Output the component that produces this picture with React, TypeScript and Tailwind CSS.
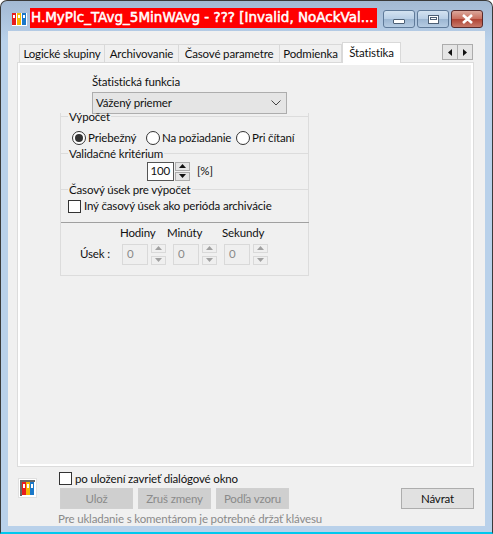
const font = "font-['Lato','Noto_Sans',sans-serif]";

function Spinner({ disabled, h = "h-[19px]" }: { disabled?: boolean; h?: string }) {
  const face = disabled ? "border-[#d9d9d9] bg-[#efefef]" : "border-[#acacac] bg-[#e5e5e5]";
  const arrow = disabled ? "#a0a0a0" : "#111";
  return (
    <div className={`flex w-[15px] flex-col justify-between ${h}`}>
      <div className={`flex h-[9px] items-center justify-center border ${face}`}>
        <svg width="7" height="4" viewBox="0 0 7 4"><path d="M3.5 0 7 4H0z" fill={arrow} /></svg>
      </div>
      <div className={`flex h-[9px] items-center justify-center border ${face}`}>
        <svg width="7" height="4" viewBox="0 0 7 4"><path d="M0 0h7L3.5 4z" fill={arrow} /></svg>
      </div>
    </div>
  );
}

function Radio({ label, checked, className }: { label: string; checked?: boolean; className: string }) {
  return (
    <div className={`flex items-center whitespace-nowrap ${className}`}>
      <span className="flex h-[14px] w-[14px] items-center justify-center rounded-full border border-[#333] bg-white">
        {checked && <span className="h-2 w-2 rounded-full bg-[#333]" />}
      </span>
      <span className="ml-[2px]">{label}</span>
    </div>
  );
}

function TimeField() {
  return (
    <div className="flex items-center gap-[3px]">
      <div className="flex h-[21px] w-[26px] items-center border border-[#d9d9d9] bg-[#efefef] pl-[4px] text-[#8a8a8a]">0</div>
      <Spinner disabled h="h-[21px]" />
    </div>
  );
}

function Section({ title, className }: { title: string; className?: string }) {
  return (
    <div className={`flex h-[14px] items-center ${className ?? ""}`}>
      <div className="h-px w-[8px] bg-[#dcdcdc]" />
      <span className="px-px leading-none">{title}</span>
      <div className="h-px flex-1 bg-[#dcdcdc]" />
    </div>
  );
}

function Tab({ label, w, active }: { label: string; w: string; active?: boolean }) {
  return active ? (
    <div className={`z-10 flex h-[21px] items-center justify-center whitespace-nowrap border border-b-0 border-[#d9d9d9] bg-white ${w}`}>{label}</div>
  ) : (
    <div className={`flex h-[19px] items-center justify-center whitespace-nowrap border-y border-r border-[#d9d9d9] bg-[#f0f0f0] first:border-l ${w}`}>{label}</div>
  );
}

function CaptionButton({ children, close }: { children: React.ReactNode; close?: boolean }) {
  return (
    <div
      className={`flex h-[18px] w-[32px] items-center justify-center rounded-[3px] border ${
        close
          ? "border-[#5a2a2a] bg-[linear-gradient(#dba79b,#c9705f_48%,#b04434_52%,#c7796a)]"
          : "border-[#5f7a99] bg-[linear-gradient(#d3e2f1,#b9cfe6_48%,#9cb6d2_52%,#b5cbe2)]"
      }`}
    >
      {children}
    </div>
  );
}

export default function App() {
  return (
    <div className={`${font} h-[534px] w-[493px] overflow-hidden bg-white text-[11.5px] leading-none tracking-[-0.15px] text-[#111]`}>
      <div className="flex h-full w-full flex-col rounded-t-[7px] border border-b-2 border-[#3a3a3a] border-b-[#00c8ee] bg-[linear-gradient(#a3b9d3,#b9d1ea_40px)] pr-[7px] pb-[6px] pl-[7px]">
        {/* title bar */}
        <div className="flex h-[30px] shrink-0 items-start pt-[7px]">
          <svg width="17" height="16" viewBox="0 0 17 16" className="mt-[4px] ml-[3px] shrink-0">
            <rect x="1" y="1" width="15" height="13" fill="#fff" />
            <rect x="1" y="1" width="4" height="12" fill="#e81c1c" />
            <rect x="6" y="1" width="4" height="12" fill="#f5b800" />
            <rect x="11" y="1" width="4" height="12" fill="#1a78c8" />
            <rect x="2" y="3" width="2" height="3" fill="#fff" />
            <rect x="7" y="3" width="2" height="3" fill="#fff" />
            <rect x="12" y="3" width="2" height="3" fill="#fff" />
          </svg>
          <div className="ml-[2px] flex h-[20px] w-[347px] items-center whitespace-nowrap bg-[#ff0000] pl-px font-['DejaVu_Sans',sans-serif] text-[13.5px] tracking-normal text-white [-webkit-text-stroke:0.5px_white]">
            H.MyPlc_TAvg_5MinWAvg - ??? [Invalid, NoAckVal...
          </div>
          <div className="mt-[2px] ml-auto flex gap-[2px] pr-[2px]">
            <CaptionButton>
              <div className="mt-[4px] h-[5px] w-[12px] rounded-[1px] border border-[#4c5f75] bg-white" />
            </CaptionButton>
            <CaptionButton>
              <div className="h-[9px] w-[11px] border border-[#4c5f75] bg-white p-[1px]"><div className="h-[3px] w-full border border-[#4c5f75]" /></div>
            </CaptionButton>
            <CaptionButton close>
              <svg width="13" height="10" viewBox="0 0 13 10"><path d="M2 1l9 8M11 1l-9 8" stroke="#fff" strokeWidth="2.6" fill="none" /></svg>
            </CaptionButton>
          </div>
        </div>

        {/* client area */}
        <div className="flex min-h-0 flex-1 flex-col bg-[#f0f0f0] px-[10px] pt-[11px]">
          <div className="relative flex h-[21px] shrink-0 items-end pl-px">
            <Tab label="Logické skupiny" w="w-[86px]" />
            <Tab label="Archivovanie" w="w-[74px]" />
            <Tab label="Časové parametre" w="w-[101px]" />
            <Tab label="Podmienka" w="w-[62px]" />
            <Tab label="Štatistika" w="w-[59px]" active />
            <div className="absolute right-[2px] bottom-[3px] flex h-[16px]">
              <div className="flex w-[16px] items-center justify-center border border-[#acacac] bg-[#e5e5e5]">
                <svg width="4" height="7" viewBox="0 0 4 7"><path d="M4 0v7L0 3.5z" fill="#111" /></svg>
              </div>
              <div className="flex w-[15px] items-center justify-center border border-l-0 border-[#acacac] bg-[#e5e5e5]">
                <svg width="4" height="7" viewBox="0 0 4 7"><path d="M0 0v7l4-3.5z" fill="#111" /></svg>
              </div>
            </div>
          </div>

          <div className="h-[403px] w-[455px] shrink-0 border-2 border-white pt-[11px] pl-[40px] shadow-[0_0_0_1px_#dcdcdc]">
            <div className="pl-[32px]">Štatistická funkcia</div>
            <div className="mt-[4px] ml-[32px] flex h-[22px] w-[195px] items-center justify-between border border-[#adadad] bg-[#e5e5e5] pr-[4px] pl-[3px]">
              Vážený priemer
              <svg width="10" height="6" viewBox="0 0 10 6" className="mr-[1px]"><path d="M.5.5 5 5 9.500.5" fill="none" stroke="#444" /></svg>
            </div>

            {/* group box */}
            <div className="mt-[-1px] h-[163px] w-[249px]">
              <div className="flex h-full flex-col border-x border-b border-[#dcdcdc]">
                <Section title="Výpočet" className="-mx-px mt-[-3px]" />
                <div className="relative mt-[7px] h-[14px]">
                  <Radio label="Priebežný" checked className="absolute left-[11px]" />
                  <Radio label="Na požiadanie" className="absolute left-[85px]" />
                  <Radio label="Pri čítaní" className="absolute left-[175px]" />
                </div>
                <Section title="Validačné kritérium" className="-mx-px mt-[2px]" />
                <div className="mt-[1px] ml-[86px] flex h-[19px] items-center">
                  <div className="flex h-[19px] w-[27px] items-center justify-end border border-[#555] bg-white pr-[3px]">100</div>
                  <div className="ml-px"><Spinner /></div>
                  <span className="ml-[7px]">[%]</span>
                </div>
                <Section title="Časový úsek pre výpočet" className="-mx-px mt-[2px]" />
                <div className="mt-[3px] ml-[7px] flex h-[13px] items-center">
                  <span className="h-[13px] w-[13px] border border-[#333] bg-white" />
                  <span className="ml-[3px]">Iný časový úsek ako perióda archivácie</span>
                </div>
                <div className="mt-[9px] -mr-px h-px bg-[#a0a0a0]" />
                <div className="relative mt-[4px] h-[13px]">
                  <span className="absolute left-[59px]">Hodiny</span>
                  <span className="absolute left-[106px]">Minúty</span>
                  <span className="absolute left-[161px]">Sekundy</span>
                </div>
                <div className="mt-[4px] flex items-center">
                  <span className="ml-[19px] w-[42px]">Úsek :</span>
                  <div className="flex gap-[7px]">
                    <TimeField />
                    <TimeField />
                    <TimeField />
                  </div>
                </div>
              </div>
            </div>
          </div>

          {/* footer */}
          <div className="mt-[6px] flex min-h-0 flex-1">
            <svg width="19" height="20" viewBox="0 0 19 20" className="mt-[6px] shrink-0">
              <rect x=".5" y=".5" width="18" height="19" fill="#fff" stroke="#e0e0e0" />
              <path d="M2 18V2h15v2H4v14z" fill="#666" />
              <rect x="4" y="4" width="4" height="13" fill="#e81c1c" />
              <rect x="8" y="4" width="4" height="13" fill="#f5b800" />
              <rect x="12" y="4" width="4" height="13" fill="#1a78c8" />
              <rect x="5" y="6" width="2" height="4" fill="#fff" />
              <rect x="9" y="6" width="2" height="4" fill="#fff" />
              <rect x="13" y="6" width="2" height="4" fill="#fff" />
            </svg>
            <div className="ml-[22px] flex flex-1 flex-col">
              <div className="flex h-[13px] items-center">
                <span className="h-[13px] w-[13px] border border-[#333] bg-white" />
                <span className="ml-[3px]">po uložení zavrieť dialógové okno</span>
              </div>
              <div className="mt-[3px] ml-px flex">
                {["Ulož", "Zruš zmeny", "Podľa vzoru"].map((b) => (
                  <div key={b} className="mr-[5px] flex h-[21px] w-[73px] items-center justify-center border border-[#d0d0d0] bg-[#cfcfcf] text-[#8a8a8a]">{b}</div>
                ))}
                <div className="ml-auto mr-[1px] flex h-[21px] w-[73px] items-center justify-center border border-[#adadad] bg-[#e1e1e1]">Návrat</div>
              </div>
              <div className="mt-[4px] -ml-[1px] text-[#8a8a8a]">Pre ukladanie s komentárom je potrebné držať klávesu</div>
            </div>
          </div>
        </div>
      </div>
    </div>
  );
}
